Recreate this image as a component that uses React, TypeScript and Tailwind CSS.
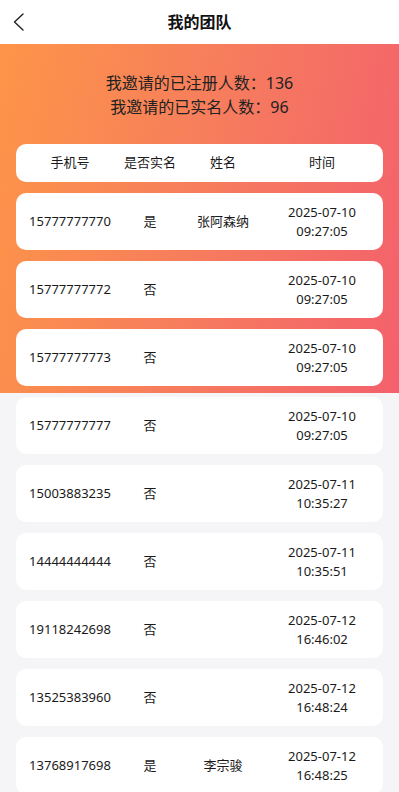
import React from "react";

const rows = [
  ["15777777770", "是", "张阿森纳", "2025-07-10", "09:27:05"],
  ["15777777772", "否", "", "2025-07-10", "09:27:05"],
  ["15777777773", "否", "", "2025-07-10", "09:27:05"],
  ["15777777777", "否", "", "2025-07-10", "09:27:05"],
  ["15003883235", "否", "", "2025-07-11", "10:35:27"],
  ["14444444444", "否", "", "2025-07-11", "10:35:51"],
  ["19118242698", "否", "", "2025-07-12", "16:46:02"],
  ["13525383960", "否", "", "2025-07-12", "16:48:24"],
  ["13768917698", "是", "李宗骏", "2025-07-12", "16:48:25"],
];

export default function App() {
  return (
    <div
      className="min-h-[792px] w-[399px] bg-[#f5f5f7] text-[#1a1a1a]"
      style={{ fontFamily: '"Noto Sans", "Noto Sans CJK SC", sans-serif' }}
    >
      <div className="relative flex h-[44px] items-center justify-center bg-white">
        <svg className="absolute left-[12px] top-[12px]" width="14" height="20" viewBox="0 0 14 20" fill="none">
          <path d="M11 2 L2.5 10 L11 18" stroke="#222" strokeWidth="1.4" strokeLinecap="round" strokeLinejoin="round" />
        </svg>
        <span className="text-[16px] font-bold text-[#111]">我的团队</span>
      </div>
      <div className="bg-[linear-gradient(100deg,#fd9548_0%,#f67a5f_55%,#f4606c_100%)] bg-[length:100%_349px] bg-no-repeat px-[16px] pb-[10px]">
        <div className="flex flex-col items-center pt-[27px] text-[16px] leading-[24px] text-[#222]">
          <div>我邀请的已注册人数：136</div>
          <div>我邀请的已实名人数：96</div>
        </div>
        <div className="mt-[25px] grid h-[38px] grid-cols-[108px_52px_94px_1fr] items-center rounded-[10px] bg-white pr-[9px] text-[13px] text-center">
          <div>手机号</div>
          <div>是否实名</div>
          <div>姓名</div>
          <div>时间</div>
        </div>
        <div className="mt-[11px] flex flex-col gap-[11px]">
          {rows.map((r, i) => (
            <div
              key={i}
              className="grid h-[57px] grid-cols-[108px_52px_94px_1fr] items-center rounded-[10px] bg-white pr-[9px] text-center text-[13px]"
            >
              <div>{r[0]}</div>
              <div>{r[1]}</div>
              <div>{r[2]}</div>
              <div className="leading-[19px]">
                <div>{r[3]}</div>
                <div>{r[4]}</div>
              </div>
            </div>
          ))}
        </div>
      </div>
    </div>
  );
}
